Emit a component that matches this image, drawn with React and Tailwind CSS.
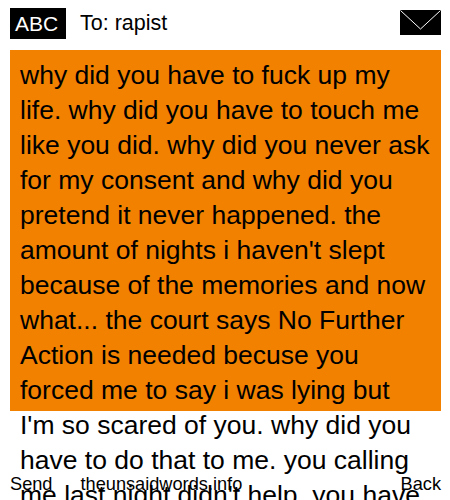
export default function App() {
  return (
    <div className="relative h-[500px] w-[450px] overflow-hidden bg-white text-black font-['Liberation_Sans',Arial,sans-serif]">
      <div className="flex h-[50px] items-start pl-[10px] pr-[9px] pt-[8px]">
        <div className="flex h-[31px] w-[56px] items-center bg-black pb-[1px] pl-[5px] text-[21px] leading-none text-white">ABC</div>
        <div className="ml-[14px] flex h-[31px] items-center text-[21.5px] leading-none">To: rapist</div>
        <svg className="ml-auto mt-[2px] shrink-0" width="41" height="25" viewBox="0 0 41 25" aria-hidden="true">
          <rect width="41" height="25" fill="#000" />
          <path d="M0.5 0.5 L20.5 19 L40.5 0.5" fill="none" stroke="#fff" strokeWidth="1" />
        </svg>
      </div>
      <div className="mx-[10px] h-[361px] w-[431px] bg-[#f28100] px-[10px] py-[8px] text-[26.5px] leading-[35px]">
        why did you have to fuck up my life. why did you have to touch me like you did. why did you never ask for my consent and why did you pretend it never happened. the amount of nights i haven't slept because of the memories and now what... the court says No Further Action is needed becuse you forced me to say i was lying but I'm so scared of you. why did you have to do that to me. you calling me last night didn't help. you have
      </div>
      <div className="absolute bottom-[6px] left-[10px] right-[9px] flex text-[18.2px] leading-[20px]">
        <span>Send</span>
        <span className="ml-[28px]">theunsaidwords.info</span>
        <span className="ml-auto">Back</span>
      </div>
    </div>
  );
}
